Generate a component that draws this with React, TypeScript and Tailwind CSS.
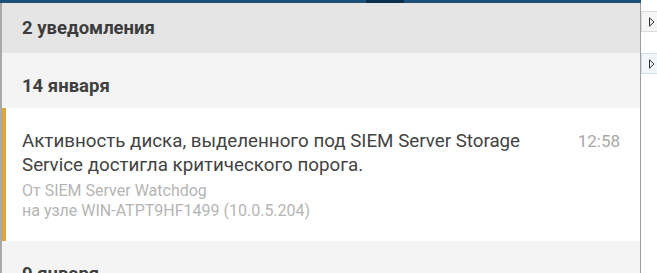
function SideButton({ tint }: { tint?: boolean }) {
  return (
    <div
      className={
        "flex h-[21px] w-[17px] items-center justify-end border pr-[2px] " +
        (tint ? "border-[#d3e2ea] bg-[#eff7fb]" : "border-[#dcdcdc] bg-[#f6f6f6]")
      }
    >
      <svg width="6" height="10" viewBox="0 0 6 10">
        <path d="M0.5 0.8 L5 5 L0.5 9.2 Z" fill="none" stroke="#333" strokeWidth="1" />
      </svg>
    </div>
  );
}

function DateRow({ label }: { label: string }) {
  return (
    <div className="h-[55px] shrink-0 bg-[#f4f4f4] pl-[20px] pt-[21px] text-[18.5px] leading-[24px] font-bold text-[#3f3f3f]">
      {label}
    </div>
  );
}

export default function App() {
  return (
    <div
      className="flex h-[273px] w-[657px] overflow-hidden bg-white"
      style={{ fontFamily: "Roboto, 'Liberation Sans', sans-serif" }}
    >
      <div className="flex w-[641px] shrink-0 flex-col">
        <div className="flex h-[3px] shrink-0 bg-[#1e4f76]">
          <div className="w-[366px]" />
          <div className="w-[38px] bg-[#0c2f4b]" />
        </div>
        <div className="flex flex-1 flex-col overflow-hidden border-r border-l-2 border-r-[#9d9d9d] border-l-[#a9a9a9]">
          <div className="flex h-[50px] shrink-0 items-center bg-[#e5e5e5] pl-[20px] pt-[1px] text-[18.5px] font-bold text-[#3c3c3c]">
            2 уведомления
          </div>

          <DateRow label="14 января" />

          <div className="-ml-[2px] flex shrink-0 border-l-[6px] border-l-[#dca73c] bg-white pt-[21px] pr-[20px] pb-[20px] pl-[16px]">
            <div className="flex-1">
              <div className="text-[18.75px] leading-[24px] text-[#434343]">
                Активность диска, выделенного под SIEM Server Storage
                <br />
                Service достигла критического порога.
              </div>
              <div className="mt-[4px] text-[16px] leading-[20px] text-[#b5b5b5]">
                <div>От SIEM Server Watchdog</div>
                <div>на узле WIN-ATPT9HF1499 (10.0.5.204)</div>
              </div>
            </div>
            <div className="text-[17px] leading-[24px] text-[#a8a8a8]">12:58</div>
          </div>

          <DateRow label="9 января" />
        </div>
      </div>

      <div className="flex flex-col gap-[21px] pt-[11px]">
        <SideButton />
        <SideButton tint />
      </div>
    </div>
  );
}
